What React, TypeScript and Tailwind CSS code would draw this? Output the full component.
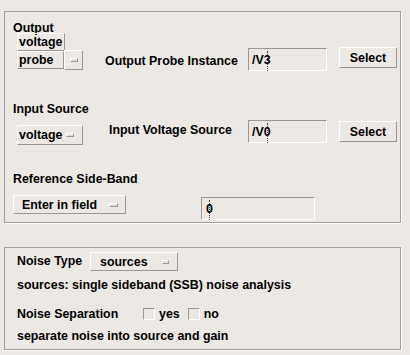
import React from "react";

const RAISED =
  "border border-t-white border-l-white border-r-[#9b9893] border-b-[#9b9893]";
const SUNKEN =
  "border border-t-[#9b9893] border-l-[#9b9893] border-r-white border-b-white";

function Dash({ w = 8 }: { w?: number }) {
  return (
    <span
      className={`block h-[4px] ${RAISED} bg-[#e4e1dc]`}
      style={{ width: w }}
    />
  );
}

function Caret({ ch }: { ch: string }) {
  return (
    <span className="relative inline-block">
      {ch}
      <span className="absolute left-[3px] top-[-2px] bottom-[-4px] w-0 border-l border-dotted border-black opacity-70" />
    </span>
  );
}

export default function App() {
  return (
    <div className="w-[410px] h-[355px] overflow-hidden bg-[#ece9e4] pt-[11px] text-black font-['Liberation_Sans',Arial,sans-serif] font-bold text-[12.4px]">
      {/* Panel 1 */}
      <div className="ml-[4px] w-[397px] h-[212px] border border-[#a3a09b] shadow-[1px_1px_0_#ffffff] pl-[8px] pt-[10px]">
        <div className="leading-[12px] h-[12px]">Output</div>
        <div className="flex items-start -mt-[1px]">
          <div className="ml-[4px] flex flex-col w-[66px]">
            <div className={`w-[48px] h-[18px] ${RAISED} flex items-center pl-[1px] leading-[14px]`}>
              voltage
            </div>
            <div className="flex items-start">
              <div className={`w-[47px] h-[18px] ${RAISED} flex items-center pl-[1px] leading-[14px]`}>
                probe
              </div>
              <div className={`w-[19px] h-[20px] -mt-[1px] ${RAISED} flex items-center justify-center`}>
                <Dash w={8} />
              </div>
            </div>
          </div>
          <div className="ml-[22px] w-[143px] mt-[21px] leading-[14px] whitespace-nowrap">
            Output Probe Instance
          </div>
          <div className={`mt-[15px] w-[79px] h-[23px] ${SUNKEN} flex items-center pl-[3px] leading-[14px]`}>
            /V<Caret ch="3" />
          </div>
          <div className={`ml-[12px] mt-[14px] w-[58px] h-[21px] ${RAISED} flex items-center justify-center leading-[14px]`}>
            Select
          </div>
        </div>

        <div className="mt-[32px] leading-[12px] h-[12px]">Input Source</div>
        <div className="flex items-start mt-[5px]">
          <div className={`ml-[4px] mt-[5px] w-[66px] h-[20px] ${RAISED} flex items-center justify-between pl-[1px] pr-[8px] leading-[14px]`}>
            <span>voltage</span>
            <Dash w={8} />
          </div>
          <div className="ml-[26px] w-[139px] mt-[3px] leading-[14px] whitespace-nowrap">
            Input Voltage Source
          </div>
          <div className={`w-[79px] h-[23px] ${SUNKEN} flex items-center pl-[3px] leading-[14px]`}>
            /V<Caret ch="0" />
          </div>
          <div className={`ml-[12px] mt-[1px] w-[58px] h-[21px] ${RAISED} flex items-center justify-center leading-[14px]`}>
            Select
          </div>
        </div>

        <div className="mt-[28px] leading-[12px] h-[12px]">Reference Side-Band</div>
        <div className="flex items-start mt-[10px]">
          <div className={`w-[113px] h-[19px] ${RAISED} flex items-center justify-between pl-[8px] pr-[7px] leading-[14px]`}>
            <span>Enter in field</span>
            <Dash w={9} />
          </div>
          <div className={`ml-[75px] mt-[2px] w-[114px] h-[23px] ${SUNKEN} flex items-center pl-[4px] leading-[14px]`}>
            <Caret ch="0" />
          </div>
        </div>
      </div>

      {/* Panel 2 */}
      <div className="ml-[4px] mt-[24px] w-[397px] h-[103px] border border-[#a3a09b] shadow-[1px_1px_0_#ffffff] pl-[12px] pt-[4px]">
        <div className="flex items-start">
          <div className="w-[73px] mt-[2px] leading-[14px] whitespace-nowrap">Noise Type</div>
          <div className={`w-[88px] h-[19px] ${RAISED} flex items-center justify-between pl-[9px] pr-[8px] leading-[14px]`}>
            <span>sources</span>
            <Dash w={7} />
          </div>
        </div>
        <div className="mt-[7px] leading-[14px] whitespace-nowrap">
          sources: single sideband (SSB) noise analysis
        </div>
        <div className="flex items-start mt-[14px]">
          <div className="w-[126px] mt-[1px] leading-[14px] whitespace-nowrap">Noise Separation</div>
          <div className={`mt-[2px] w-[12px] h-[12px] ${SUNKEN}`} />
          <div className="ml-[4px] mt-[1px] leading-[14px]">yes</div>
          <div className={`ml-[8px] mt-[2px] w-[12px] h-[12px] ${SUNKEN}`} />
          <div className="ml-[4px] mt-[1px] leading-[14px]">no</div>
        </div>
        <div className="mt-[8px] leading-[14px] whitespace-nowrap">
          separate noise into source and gain
        </div>
      </div>
    </div>
  );
}
